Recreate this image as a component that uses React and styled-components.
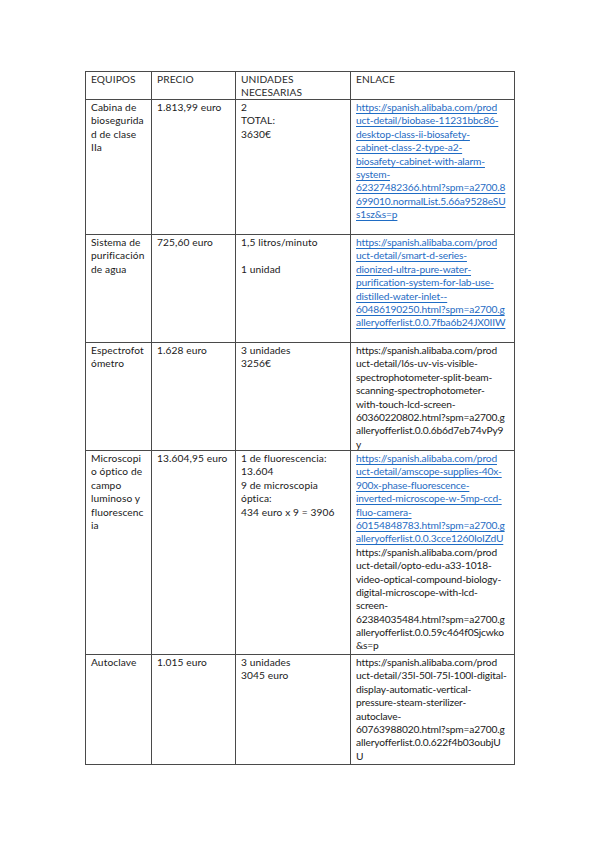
import React from 'react';
import styled, { createGlobalStyle } from 'styled-components';

const GlobalStyle = createGlobalStyle`
  html, body {
    margin: 0;
    padding: 0;
    background: #ffffff;
  }
`;

const Page = styled.div`
  width: 599px;
  height: 848px;
  box-sizing: border-box;
  padding: 71px 0 0 85px;
  background: #ffffff;
  font-family: Lato, "Liberation Sans", sans-serif;
  font-size: 10.2px;
  color: #1a1a1a;
`;

const Table = styled.table`
  border-collapse: collapse;
  table-layout: fixed;
  width: 429px;
  border: 1px solid #4a4a4a;
`;

const Col = styled.col`
  width: ${(p) => p.$w}px;
`;

const Cell = styled.td`
  border: 1px solid #4a4a4a;
  padding: 0;
  vertical-align: top;
`;

const CellBody = styled.div`
  height: ${(p) => p.$h}px;
  box-sizing: border-box;
  padding: 1px 0 0 5px;
  line-height: 13.4px;
  overflow: visible;
`;

const Line = styled.div`
  white-space: nowrap;
  height: 13.4px;
  letter-spacing: ${(p) => (p.$tight ? '-0.15px' : '0.1px')};
  color: ${(p) => (p.$link ? '#1f6cc4' : p.$head ? '#2b2b2b' : '#1a1a1a')};
  text-decoration: ${(p) => (p.$link ? 'underline' : 'none')};
  text-underline-offset: 1.5px;
`;

const columns = [66, 84, 115, 164];

const rows = [
  {
    h: 28,
    head: true,
    cells: [
      [{ t: 'EQUIPOS' }],
      [{ t: 'PRECIO' }],
      [{ t: 'UNIDADES' }, { t: 'NECESARIAS' }],
      [{ t: 'ENLACE' }],
    ],
  },
  {
    h: 135,
    cells: [
      ['Cabina de', 'bioseguridа', 'd de clase', 'IIa'].map((t) => ({ t })),
      [{ t: '1.813,99 euro' }],
      ['2', 'TOTAL:', '3630€'].map((t) => ({ t })),
      [
        'https://spanish.alibaba.com/prod',
        'uct-detail/biobase-11231bbc86-',
        'desktop-class-ii-biosafety-',
        'cabinet-class-2-type-a2-',
        'biosafety-cabinet-with-alarm-',
        'system-',
        '62327482366.html?spm=a2700.8',
        '699010.normalList.5.66a9528eSU',
        's1sz&s=p',
      ].map((t) => ({ t, link: true, tight: true })),
    ],
  },
  {
    h: 108,
    cells: [
      ['Sistema de', 'purificación', 'de agua'].map((t) => ({ t })),
      [{ t: '725,60 euro' }],
      ['1,5 litros/minuto', '', '1 unidad'].map((t) => ({ t })),
      [
        'https://spanish.alibaba.com/prod',
        'uct-detail/smart-d-series-',
        'dionized-ultra-pure-water-',
        'purification-system-for-lab-use-',
        'distilled-water-inlet--',
        '60486190250.html?spm=a2700.g',
        'alleryofferlist.0.0.7fba6b24JX0IIW',
      ].map((t) => ({ t, link: true, tight: true })),
    ],
  },
  {
    h: 108,
    cells: [
      ['Espectrofot', 'ómetro'].map((t) => ({ t })),
      [{ t: '1.628 euro' }],
      ['3 unidades', '3256€'].map((t) => ({ t })),
      [
        'https://spanish.alibaba.com/prod',
        'uct-detail/l6s-uv-vis-visible-',
        'spectrophotometer-split-beam-',
        'scanning-spectrophotometer-',
        'with-touch-lcd-screen-',
        '60360220802.html?spm=a2700.g',
        'alleryofferlist.0.0.6b6d7eb74vPy9',
        'y',
      ].map((t) => ({ t, tight: true })),
    ],
  },
  {
    h: 204,
    cells: [
      ['Microscopi', 'o óptico de', 'campo', 'luminoso y', 'fluorescenc', 'ia'].map((t) => ({ t })),
      [{ t: '13.604,95 euro' }],
      ['1 de fluorescencia:', '13.604', '9 de microscopia', 'óptica:', '434 euro x 9 = 3906'].map((t) => ({ t })),
      [
        ...[
          'https://spanish.alibaba.com/prod',
          'uct-detail/amscope-supplies-40x-',
          '900x-phase-fluorescence-',
          'inverted-microscope-w-5mp-ccd-',
          'fluo-camera-',
          '60154848783.html?spm=a2700.g',
          'alleryofferlist.0.0.3cce1260IoIZdU',
        ].map((t) => ({ t, link: true, tight: true })),
        ...[
          'https://spanish.alibaba.com/prod',
          'uct-detail/opto-edu-a33-1018-',
          'video-optical-compound-biology-',
          'digital-microscope-with-lcd-',
          'screen-',
          '62384035484.html?spm=a2700.g',
          'alleryofferlist.0.0.59c464f0Sjcwko',
          '&s=p',
        ].map((t) => ({ t, tight: true })),
      ],
    ],
  },
  {
    h: 110,
    cells: [
      [{ t: 'Autoclave' }],
      [{ t: '1.015 euro' }],
      ['3 unidades', '3045 euro'].map((t) => ({ t })),
      [
        'https://spanish.alibaba.com/prod',
        'uct-detail/35l-50l-75l-100l-digital-',
        'display-automatic-vertical-',
        'pressure-steam-sterilizer-',
        'autoclave-',
        '60763988020.html?spm=a2700.g',
        'alleryofferlist.0.0.622f4b03oubjU',
        'U',
      ].map((t) => ({ t, tight: true })),
    ],
  },
];

const App = () => (
  <Page>
    <GlobalStyle />
    <Table>
      <colgroup>
        {columns.map((w, i) => (
          <Col key={i} $w={w} />
        ))}
      </colgroup>
      <tbody>
        {rows.map((row, r) => (
          <tr key={r}>
            {row.cells.map((lines, c) => (
              <Cell key={c}>
                <CellBody $h={row.h - 1}>
                  {lines.map((l, i) => (
                    <Line key={i} $link={l.link} $tight={l.tight} $head={row.head}>
                      {l.t || '\u00a0'}
                    </Line>
                  ))}
                </CellBody>
              </Cell>
            ))}
          </tr>
        ))}
      </tbody>
    </Table>
  </Page>
);

export default App;
